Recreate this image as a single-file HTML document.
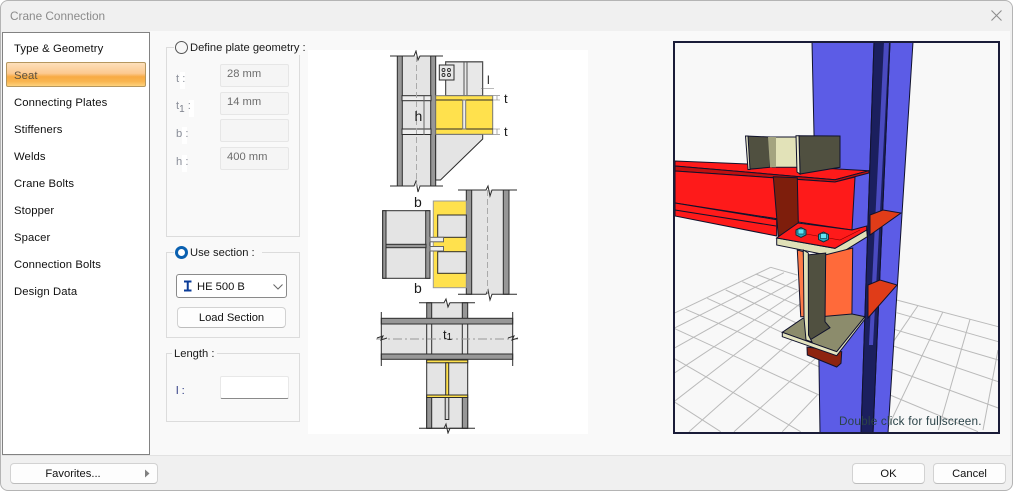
<!DOCTYPE html>
<html><head><meta charset="utf-8"><style>
html,body{margin:0;padding:0;width:1013px;height:491px;overflow:hidden;background:#fff}
body{font-family:"Liberation Sans",sans-serif;font-size:11.2px;color:#111;position:relative}
div{box-sizing:border-box}
.a{position:absolute}
.t{position:absolute;white-space:nowrap;line-height:14px}
.li{position:absolute;left:14px;white-space:nowrap;line-height:14px;font-size:11.3px;letter-spacing:.1px;color:#101010}
.g{position:absolute;border:1px solid #dcdcdc;left:166px;width:134px}
.in{position:absolute;left:220px;width:69px;height:23px;border:1px solid #e6e6e6;background:#f5f5f5;border-radius:2px;color:#6c6c6c;padding:2px 0 0 6px;line-height:14px}
.lb{position:absolute;left:176px;color:#8a8e99;line-height:14px}
.w{position:absolute;background:#fff;width:5px;height:17px}
.btn{position:absolute;background:#fdfdfd;border:1px solid #d2d2d2;border-bottom-color:#bdbdbd;border-radius:4px;text-align:center;line-height:20px;color:#111}
</style></head><body>
<div class="a" style="left:0;top:0;width:1013px;height:491px;background:#f0f0f0;border:1px solid #b4b4b4;border-radius:8px"></div>
<div class="a" style="left:150px;top:31px;width:860px;height:424px;background:#f9f9f9"></div>
<div class="a" style="left:2px;top:455px;width:1009px;height:1px;background:#e2e2e2"></div>
<div class="t" style="left:10px;top:9px;font-size:11.8px;color:#8b8b8b">Crane Connection</div>
<svg class="a" style="left:990px;top:9px" width="13" height="13"><path d="M1.500 1.500L11.500 11.500M11.500 1.500L1.500 11.500" stroke="#8c8c8c" stroke-width="1.100"/></svg>

<div class="a" style="left:2px;top:32px;width:148px;height:423px;background:#fff;border:1px solid #828282"></div>
<div class="a" style="left:6px;top:62px;width:140px;height:25px;border:1px solid #b5975f;border-radius:2px;background:linear-gradient(#fde0bb 0%,#fcc990 45%,#f8ab44 60%,#f9b550 80%,#fdd27c 100%)"></div>
<div class="li" style="top:42px">Type &amp; Geometry</div>
<div class="li" style="top:69px;color:#5b5140">Seat</div>
<div class="li" style="top:96px">Connecting Plates</div>
<div class="li" style="top:123px">Stiffeners</div>
<div class="li" style="top:150px">Welds</div>
<div class="li" style="top:177px">Crane Bolts</div>
<div class="li" style="top:204px">Stopper</div>
<div class="li" style="top:231px">Spacer</div>
<div class="li" style="top:258px">Connection Bolts</div>
<div class="li" style="top:285px">Design Data</div>

<div class="g" style="top:47px;height:190px"></div>
<div class="a" style="left:174px;top:40px;width:132px;height:15px;background:#f9f9f9"></div>
<div class="a" style="left:174.500px;top:41px;width:13px;height:13px;border:1px solid #555;border-radius:50%;background:#f7f7f7"></div>
<div class="t" style="left:190px;top:41px;color:#1a1a1a">Define plate geometry :</div>
<div class="w" style="left:180px;top:72px"></div>
<div class="w" style="left:189px;top:100px"></div>
<div class="w" style="left:182px;top:127px"></div>
<div class="w" style="left:182px;top:155px"></div>
<div class="lb" style="top:72px">t :</div>
<div class="lb" style="top:99px">t<sub style="font-size:10px;line-height:0;color:#7a7e89">1</sub> :</div>
<div class="lb" style="top:127px">b :</div>
<div class="lb" style="top:155px">h :</div>
<div class="in" style="top:64px">28 mm</div>
<div class="in" style="top:92px">14 mm</div>
<div class="in" style="top:119px"></div>
<div class="in" style="top:147px">400 mm</div>

<div class="g" style="top:252px;height:86px"></div>
<div class="a" style="left:174px;top:245px;width:88px;height:15px;background:#f9f9f9"></div>
<div class="a" style="left:175px;top:246px;width:13px;height:13px;border:3.500px solid #0a60b0;border-radius:50%;background:#fff"></div>
<div class="t" style="left:190px;top:246px;color:#1a1a1a">Use section :</div>
<div class="a" style="left:176px;top:274px;width:111px;height:24px;border:1px solid #8a8a8a;border-radius:3px;background:#fff"></div>
<svg class="a" style="left:183px;top:280px" width="10" height="12"><path d="M1 1.500H8.500M1 10.500H8.500M4.750 1.500V10.500" stroke="#0b3c98" stroke-width="2" fill="none"/></svg>
<div class="t" style="left:197px;top:280px;color:#111">HE 500 B</div>
<svg class="a" style="left:272px;top:283px" width="12" height="8"><path d="M1.500 1.500L6 6L10.500 1.500" stroke="#666" fill="none"/></svg>
<div class="btn" style="left:177px;top:307px;width:109px;height:21px;line-height:21px">Load Section</div>

<div class="g" style="top:353px;height:69px"></div>
<div class="a" style="left:172px;top:346px;width:45px;height:15px;background:#f9f9f9"></div>
<div class="t" style="left:174px;top:347px;color:#1a1a1a">Length :</div>
<div class="t" style="left:176px;top:384px;color:#27357e">l :</div>
<div class="a" style="left:220px;top:376px;width:69px;height:23px;background:#fff;border:1px solid #e8e8e8;border-bottom:1px solid #8a8a8a;border-radius:2px"></div>

<div class="btn" style="left:10px;top:463px;width:148px;height:21px;padding-right:22px">Favorites...</div>
<svg class="a" style="left:144px;top:469px" width="7" height="10"><path d="M1 0.500L5.500 4.500L1 8.500Z" fill="#808080"/></svg>
<div class="btn" style="left:852px;top:463px;width:73px;height:21px">OK</div>
<div class="btn" style="left:933px;top:463px;width:73px;height:21px">Cancel</div>

<!-- technical drawing -->
<svg class="a" style="left:308px;top:50px" width="280" height="384" viewBox="308 50 280 384">
<rect x="308" y="50" width="280" height="384" fill="#fff"/>
<g stroke="#2c2c2c" stroke-width="1">
<!-- Detail 1 -->
<rect x="402" y="56" width="29" height="130" fill="#e4e4e4" stroke="none"/>
<rect x="397.300" y="56" width="5" height="130" fill="#979797"/>
<rect x="430.700" y="56" width="5" height="130" fill="#979797"/>
<path d="M390 56H414L416 51L418 60L420 56H443M390 186H414L416 181L418 192L420 186H443" fill="none"/>
<rect x="402" y="95.700" width="29" height="5" fill="#eee"/>
<rect x="402" y="129" width="29" height="5.500" fill="#eee"/>
<path d="M416.500 56V186" stroke="#aaa" stroke-dasharray="6 3" fill="none"/>
<path d="M424 96V135" stroke="#666" fill="none"/>
<rect x="445.700" y="61.700" width="37" height="34" fill="#e8e8e8"/>
<path d="M464 62V95M467 62V95M446 62H483" stroke="#555" fill="none"/>
<rect x="439.300" y="65" width="14.700" height="15" fill="#e8e8e8"/>
<g fill="none" stroke-width=".9"><circle cx="443.500" cy="70" r="1.500"/><circle cx="449" cy="70" r="1.500"/><circle cx="443.500" cy="75" r="1.500"/><circle cx="449" cy="75" r="1.500"/></g>
<path d="M435.700 134.300H482.700V139L440.500 180H435.700Z" fill="#e4e4e4"/>
<rect x="435.700" y="95.700" width="57" height="38.600" fill="#ffe14d" stroke="#777"/>
<path d="M436 100H492.700M436 129H492.700" fill="none"/>
<rect x="462.700" y="100" width="3" height="29" fill="#eee" stroke="#777"/>
<path d="M481 88.500H494M497 95.700V100M497 129V134.300M493 95.700H500M493 100H500M493 129H500M493 134.300H500" fill="none" stroke="#777" stroke-width=".6"/>
<!-- Detail 2 -->
<rect x="471.700" y="190" width="31.600" height="104" fill="#e4e4e4" stroke="none"/>
<rect x="466.300" y="190" width="5.400" height="104.300" fill="#979797"/>
<rect x="503.300" y="190" width="5.700" height="104.300" fill="#979797"/>
<path d="M458 190H486L488 186L490 196L492 190H517M458 294.300H486L488 290L490 300L492 294.300H517" fill="none"/>
<path d="M487.500 190V294" stroke="#aaa" stroke-dasharray="6 3" fill="none"/>
<rect x="433.300" y="201" width="33" height="86.700" fill="#ffe14d" stroke="#999"/>
<rect x="437.700" y="215" width="28.600" height="22.300" fill="#e4e4e4"/>
<rect x="437.700" y="251.700" width="28.600" height="21.600" fill="#e4e4e4"/>
<rect x="382.700" y="210.700" width="47.300" height="67.600" fill="#e4e4e4" stroke-width="1"/>
<rect x="382.700" y="210.700" width="3.300" height="67.600" fill="#979797"/>
<rect x="425.700" y="210.700" width="4.300" height="67.600" fill="#979797"/>
<rect x="386" y="244.300" width="40" height="3.400" fill="#979797"/>
<rect x="430" y="237.300" width="13.500" height="4.500" fill="#eee" stroke="#666"/>
<rect x="430" y="246.500" width="13.500" height="4.500" fill="#eee" stroke="#666"/>
<!-- Detail 3 -->
<rect x="431.700" y="302.700" width="30.600" height="16" fill="#e4e4e4" stroke="none"/>
<rect x="426.700" y="302.700" width="5" height="16" fill="#979797"/>
<rect x="462.300" y="302.700" width="5.400" height="16" fill="#979797"/>
<path d="M419 302.700H444L446 299L448 307L450 302.700H475" fill="none"/>
<rect x="381.300" y="324" width="131.400" height="30" fill="#e4e4e4" stroke="none"/>
<rect x="381.300" y="318.300" width="131.400" height="5.700" fill="#979797"/>
<rect x="381.300" y="354" width="131.400" height="5.300" fill="#979797"/>
<path d="M426.700 324V354M431.700 324V354M462.300 324V354M467.700 324V354" fill="none"/>
<path d="M376 339H518" stroke="#999" stroke-dasharray="9 3 2 3" fill="none"/>
<path d="M381.300 312V366M512.700 312V366M377 338L383 336L381 340L387 338M508 338L514 336L512 340L518 338" fill="none"/>
<rect x="426.700" y="360" width="41" height="68.300" fill="#e4e4e4"/>
<rect x="426.700" y="397.300" width="5" height="31" fill="#979797"/>
<rect x="462.300" y="397.300" width="5.400" height="31" fill="#979797"/>
<rect x="426.700" y="360" width="41" height="2.800" fill="#ffe14d"/>
<rect x="426.700" y="395" width="41" height="2.500" fill="#ffe14d"/>
<rect x="445.700" y="362.800" width="3" height="32.200" fill="#ffe14d"/>
<rect x="445.200" y="397.500" width="3.600" height="22" fill="#d8d8d8"/>
<path d="M419 428.300H444L446 424L448 433L450 428.300H475" fill="none"/>
</g>
<g font-family="'Liberation Sans',sans-serif" font-size="14" fill="#1a1a1a">
<text x="414.500" y="121">h</text>
<text x="487" y="84" font-size="12">l</text>
<text x="504" y="103" font-size="13">t</text>
<text x="504" y="136" font-size="13">t</text>
<text x="414" y="207">b</text>
<text x="414" y="293">b</text>
<text x="443" y="339" font-size="13">t<tspan font-size="10" dy="1">1</tspan></text>
</g>
</svg>

<!-- 3D view -->
<svg class="a" style="left:673px;top:41px" width="327" height="393" viewBox="673 41 327 393">
<rect x="673" y="41" width="327" height="393" fill="#f8f8f8"/>
<g stroke="#bababa" stroke-width="1" fill="none">
<path d="M770.700 267.300L674 313.300M784 272.700L674 328.300M797.300 279.300L674 348.300M800.700 289.300L674 373.300M800.700 303.300L674 401.700M807.300 326.700L689 431.700M817.300 356.700L734 431.700M817.300 395L782.300 431.700"/>
<path d="M770.700 267.300L797.300 275M755.700 274L797.300 290M742.300 281.700L800.700 306.700M725.700 290L800.700 325M707.300 298.300L784 333.300M685.700 309.300L819 366.700M674 328.300L819 395M674 358.300L800.700 431.700M674 401.700L720.700 431.700"/>
<path d="M896.700 300L998.300 326.700M896.700 312.700L998.300 341.700M894 329.300L998.300 360M893.300 346L998.300 381.700M891.700 369L998.300 408M890 395L978 431.700"/>
<path d="M917.700 306L893.300 341.700M942.700 312.300L886.700 430M970 319.300L938.300 430M998 350L983 430"/>
</g>
<g stroke="#10122c" stroke-width="1">
<path d="M812 42H874L861 433H820L819 365L814 134Z" fill="#5c5ce6"/>
<path d="M890 42H913L888 433H873Z" fill="#5c5ce6"/>
<path d="M874 42H890L873 433H861Z" fill="#1b1f5e"/>
<path d="M884 42H889L873 345L869 345Z" fill="#4a4ac0" stroke="none"/>
<path d="M870 215L883 210L901 213L870 235Z" fill="#e03c18"/>
<path d="M868 285L880 280L897 285L868 318Z" fill="#e03c18"/>
<!-- beam -->
<path d="M675 161L748 164L869 170.700L835 179.700L675 166Z" fill="#fe1a1a"/>
<path d="M675 166L835 179.700L869 170.700L869 173L835 182L675 171Z" fill="#c01010"/>
<path d="M675 171L835 182L855 177L852 230L798 222L675 203Z" fill="#fe1a1a"/>
<path d="M675 203L776.700 219.700L776.700 236L675 216Z" fill="#fe1a1a"/>
<path d="M675 210L776 226" fill="none"/>
<!-- channel -->
<path d="M746 136L770 137L770 167.300L748.300 169.300Z" fill="#505040"/>
<path d="M770 137H798V167.300H772Z" fill="#e2e2b8"/>
<path d="M768 137H776V167.300H770Z" fill="#a4a480" stroke="none"/>
<path d="M799 135.700L840 136V167.300L800 174Z" fill="#505040"/>
<path d="M796 135.700H799L800 174L797 172Z" fill="#e8e8c8"/>
<path d="M745.500 136H748L750 169.500H748Z" fill="#e8e8c8"/>
<!-- rib and seat plate -->
<path d="M773.300 176.700L797.300 177.700L798.300 223.300L778.300 236.700Z" fill="#7e1e0c"/>
<path d="M776.700 238L776.700 245L835 256.700L867.300 236.700L866.700 230L835 248.300Z" fill="#e0e0b8"/>
<path d="M778 237L798 223L852 230L866.700 226L866.700 230L835 248.300L776.700 238Z" fill="#fe1a1a"/>
<path d="M795 232L840 240L860 230" fill="none" stroke="#800" stroke-width=".6"/>
<!-- lower section -->
<path d="M797.300 250L803.300 251.700L805.700 316.700L800.700 316.700Z" fill="#ff7a48"/>
<path d="M825 255L852.700 248L851.700 333L830 327L825 322Z" fill="#ff6a3a"/>
<path d="M807 347L841.700 351.700L841 363.300L836.700 367L807.300 355Z" fill="#8e2410"/>
<path d="M782.300 332.300L802.700 318.300L806 318L852 314L865 316.700L836.700 351.700Z" fill="#8c8c6c"/>
<path d="M782.300 332.300L836.700 351.700L865 316.700L865 319L836.700 355.700L782.300 336.700Z" fill="#e4e4c0"/>
<path d="M806.700 255L825.700 253L825 321.700L830 327.700L810 340L806.700 335Z" fill="#505040"/>
<path d="M803.300 250L808.300 253L808.500 335L812 342L806 340L804 318Z" fill="#e0e0b8"/>
</g>
<g stroke="#10303a" stroke-width="1">
<path d="M796 230L801 227.500L806 230V235L801 237.500L796 235Z" fill="#2aa8c0"/>
<path d="M818.500 234.500L823.500 232L828.500 234.500V239.500L823.500 242L818.500 239.500Z" fill="#2aa8c0"/>
<rect x="798" y="229" width="6" height="5" fill="#60e4f4" stroke-width=".6"/>
<rect x="820.500" y="233.500" width="6" height="5" fill="#60e4f4" stroke-width=".6"/>
</g>
<text x="839" y="425" font-family="'Liberation Sans',sans-serif" font-size="11.750" fill="#2b4348" letter-spacing=".2">Double click for fullscreen.</text>
<rect x="674" y="42" width="325" height="391" fill="none" stroke="#1a1c38" stroke-width="2"/>
</svg>
</body></html>
